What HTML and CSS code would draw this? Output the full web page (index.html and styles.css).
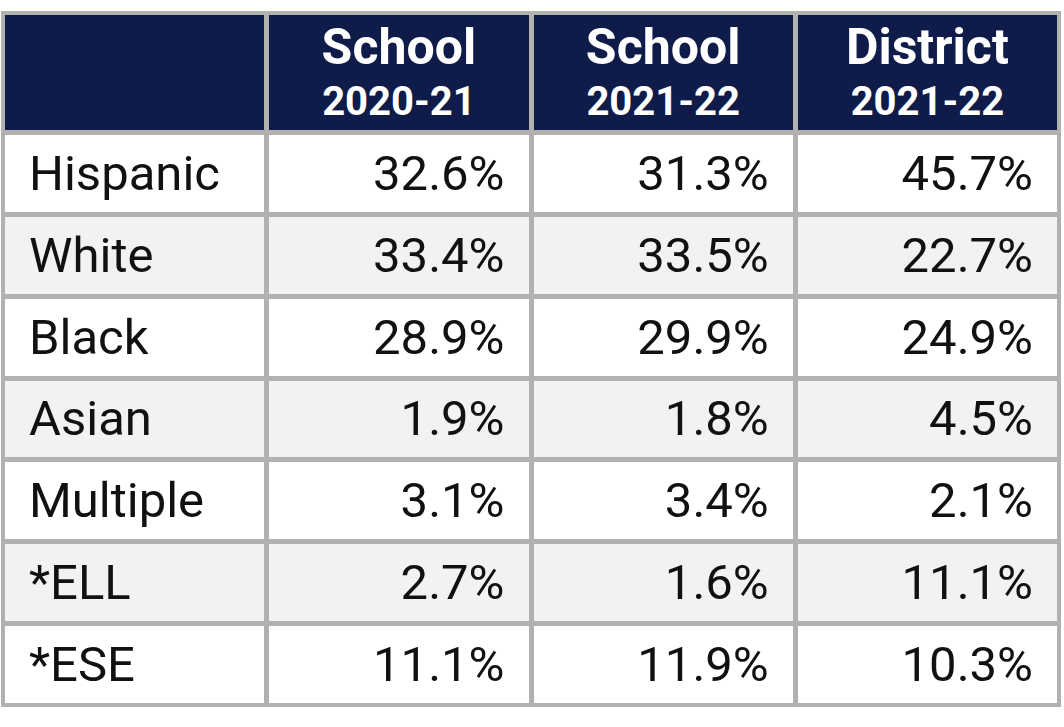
FILE: index.html
```html
<!DOCTYPE html>
<html lang="en">
<head>
<meta charset="utf-8">
<title>Demographics</title>
<link rel="stylesheet" href="styles.css">
</head>
<body>
<div class="table">
  <div class="th"></div>
  <div class="th"><span class="t1">School</span><span class="t2">2020-21</span></div>
  <div class="th"><span class="t1">School</span><span class="t2">2021-22</span></div>
  <div class="th"><span class="t1">District</span><span class="t2">2021-22</span></div>

  <div class="td label">Hispanic</div><div class="td num">32.6%</div><div class="td num">31.3%</div><div class="td num">45.7%</div>
  <div class="td label alt">White</div><div class="td num alt">33.4%</div><div class="td num alt">33.5%</div><div class="td num alt">22.7%</div>
  <div class="td label">Black</div><div class="td num">28.9%</div><div class="td num">29.9%</div><div class="td num">24.9%</div>
  <div class="td label alt">Asian</div><div class="td num alt">1.9%</div><div class="td num alt">1.8%</div><div class="td num alt">4.5%</div>
  <div class="td label">Multiple</div><div class="td num">3.1%</div><div class="td num">3.4%</div><div class="td num">2.1%</div>
  <div class="td label alt">*ELL</div><div class="td num alt">2.7%</div><div class="td num alt">1.6%</div><div class="td num alt">11.1%</div>
  <div class="td label">*ESE</div><div class="td num">11.1%</div><div class="td num">11.9%</div><div class="td num">10.3%</div>
</div>
</body>
</html>
```

FILE: styles.css
```css
html, body {
  margin: 0;
  padding: 0;
  background: #ffffff;
}

body {
  font-family: Roboto, "Liberation Sans", sans-serif;
}

.table {
  box-sizing: border-box;
  width: 1060px;
  height: 696px;
  margin: 11px 0 0 1px;
  padding: 4px;
  background: #b1b2b0;
  display: grid;
  grid-template-columns: repeat(4, 1fr);
  grid-template-rows: 115px repeat(7, 1fr);
  gap: 5px;
}

.th {
  background: #0f1c49;
  color: #ffffff;
  font-weight: 700;
  display: flex;
  flex-direction: column;
  align-items: center;
  justify-content: center;
}

.t1 {
  font-size: 50px;
  line-height: 56px;
}

.t2 {
  font-size: 40px;
  line-height: 50px;
  margin-top: 2px;
}

.td {
  background: #ffffff;
  color: #111111;
  font-size: 49px;
  display: flex;
  align-items: center;
  padding: 0 24px;
}

.td.alt {
  background: #f2f2f2;
}

.label {
  justify-content: flex-start;
}

.num {
  justify-content: flex-end;
}
```
